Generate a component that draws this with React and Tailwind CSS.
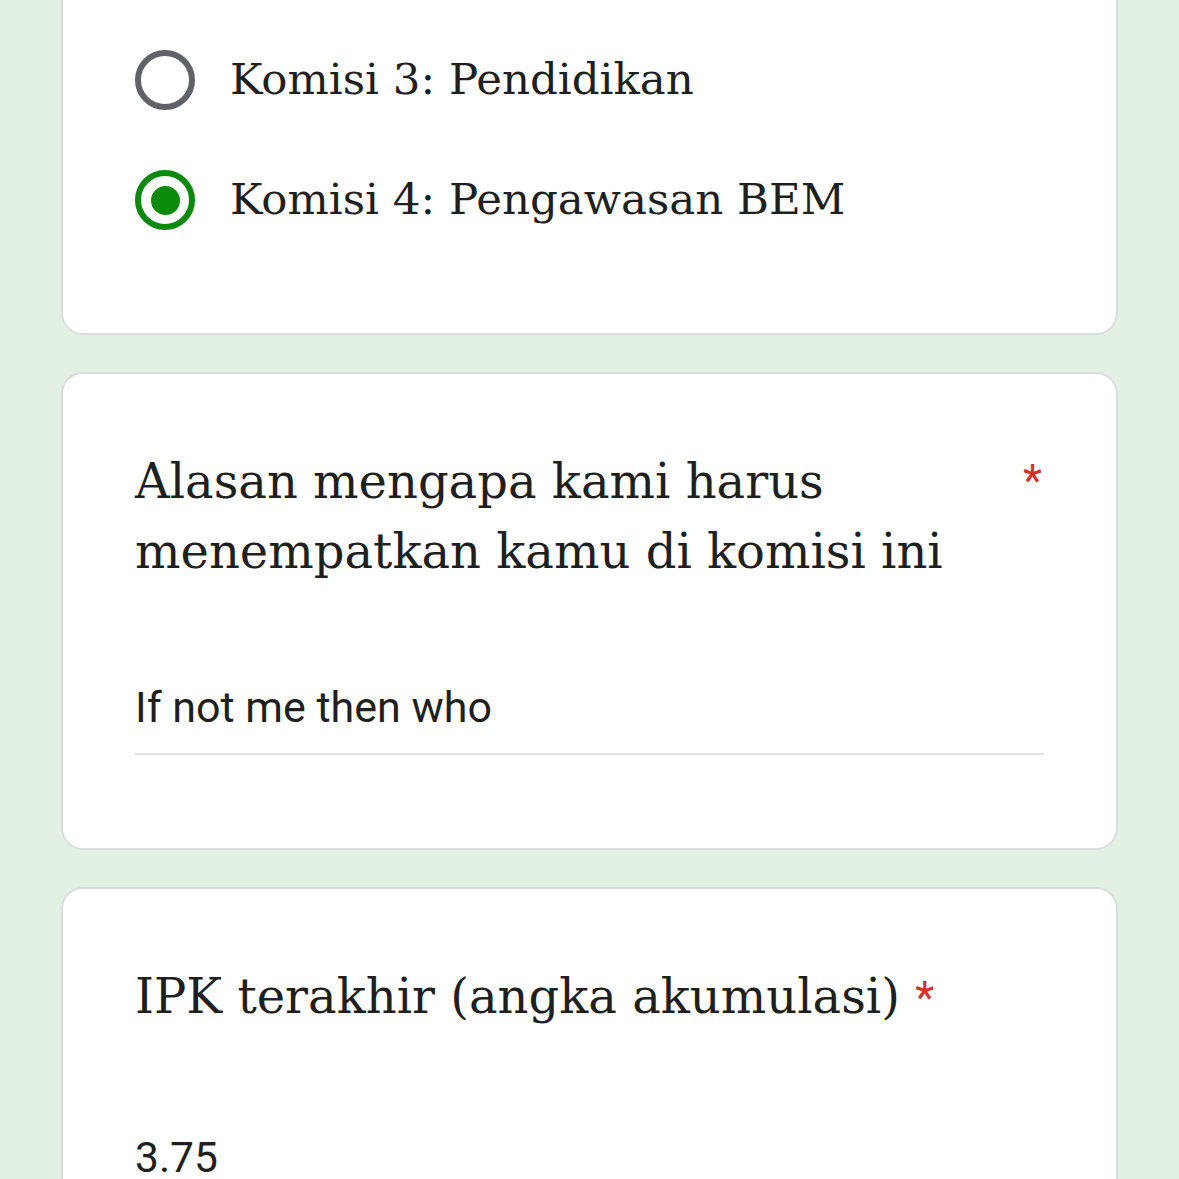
import React, { useState } from 'react';

const serif = { fontFamily: '"DejaVu Serif", "Liberation Serif", serif' };
const sans = { fontFamily: 'Roboto, "Noto Sans", sans-serif' };

const Radio = ({ checked }) => (
  <span
    className={`flex h-[60px] w-[60px] shrink-0 items-center justify-center rounded-full border-[6px] ${
      checked ? 'border-[#0a8a0a]' : 'border-[#5f6368]'
    }`}
  >
    {checked && <span className="h-[29px] w-[29px] rounded-full bg-[#0a8a0a]" />}
  </span>
);

const Card = ({ children, className = '' }) => (
  <div className={`rounded-[22px] border-2 border-[#dadce0] bg-white px-[72px] ${className}`}>{children}</div>
);

const Required = ({ className = '' }) => (
  <span className={`text-[#d93025] ${className}`} style={sans}>*</span>
);

const App = () => {
  const [komisi, setKomisi] = useState(4);
  const options = [
    { id: 3, label: 'Komisi 3: Pendidikan' },
    { id: 4, label: 'Komisi 4: Pengawasan BEM' },
  ];

  return (
    <div className="min-h-[1179px] overflow-hidden bg-[#e3f1e4] text-[#1f1f1f]">
      <div className="mx-[61px] flex flex-col gap-[37px]">
        {/* pilihan komisi (sudah discroll) */}
        <Card className="-mt-[60px] pt-[78px] pb-[73px]">
          {options.map((o) => (
            <button
              key={o.id}
              type="button"
              onClick={() => setKomisi(o.id)}
              className="flex h-[120px] w-full items-center gap-[35px] text-left"
            >
              <Radio checked={komisi === o.id} />
              <span className="text-[43.5px] leading-none" style={serif}>
                {o.label}
              </span>
            </button>
          ))}
        </Card>

        {/* alasan */}
        <Card className="pt-[72px] pb-[93px]">
          <div className="flex items-start">
            <h2 className="flex-1 pr-[60px] text-[48px] leading-[70px]" style={serif}>
              Alasan mengapa kami harus menempatkan kamu di komisi ini
            </h2>
            <Required className="pr-[2px] text-[44px] leading-[70px]" />
          </div>
          <div className="mt-[96px] border-b-2 border-[#e0e0e0] pb-[21px]">
            <p className="text-[43px] leading-[50px]" style={sans}>
              If not me then who
            </p>
          </div>
        </Card>

        {/* IPK */}
        <Card className="min-h-[400px] pt-[72px]">
          <h2 className="text-[48px] leading-[70px]" style={serif}>
            IPK terakhir (angka akumulasi) <Required className="text-[44px]" />
          </h2>
          <p className="mt-[100px] text-[42.5px] leading-[50px]" style={sans}>
            3.75
          </p>
        </Card>
      </div>
    </div>
  );
};

export default App;
